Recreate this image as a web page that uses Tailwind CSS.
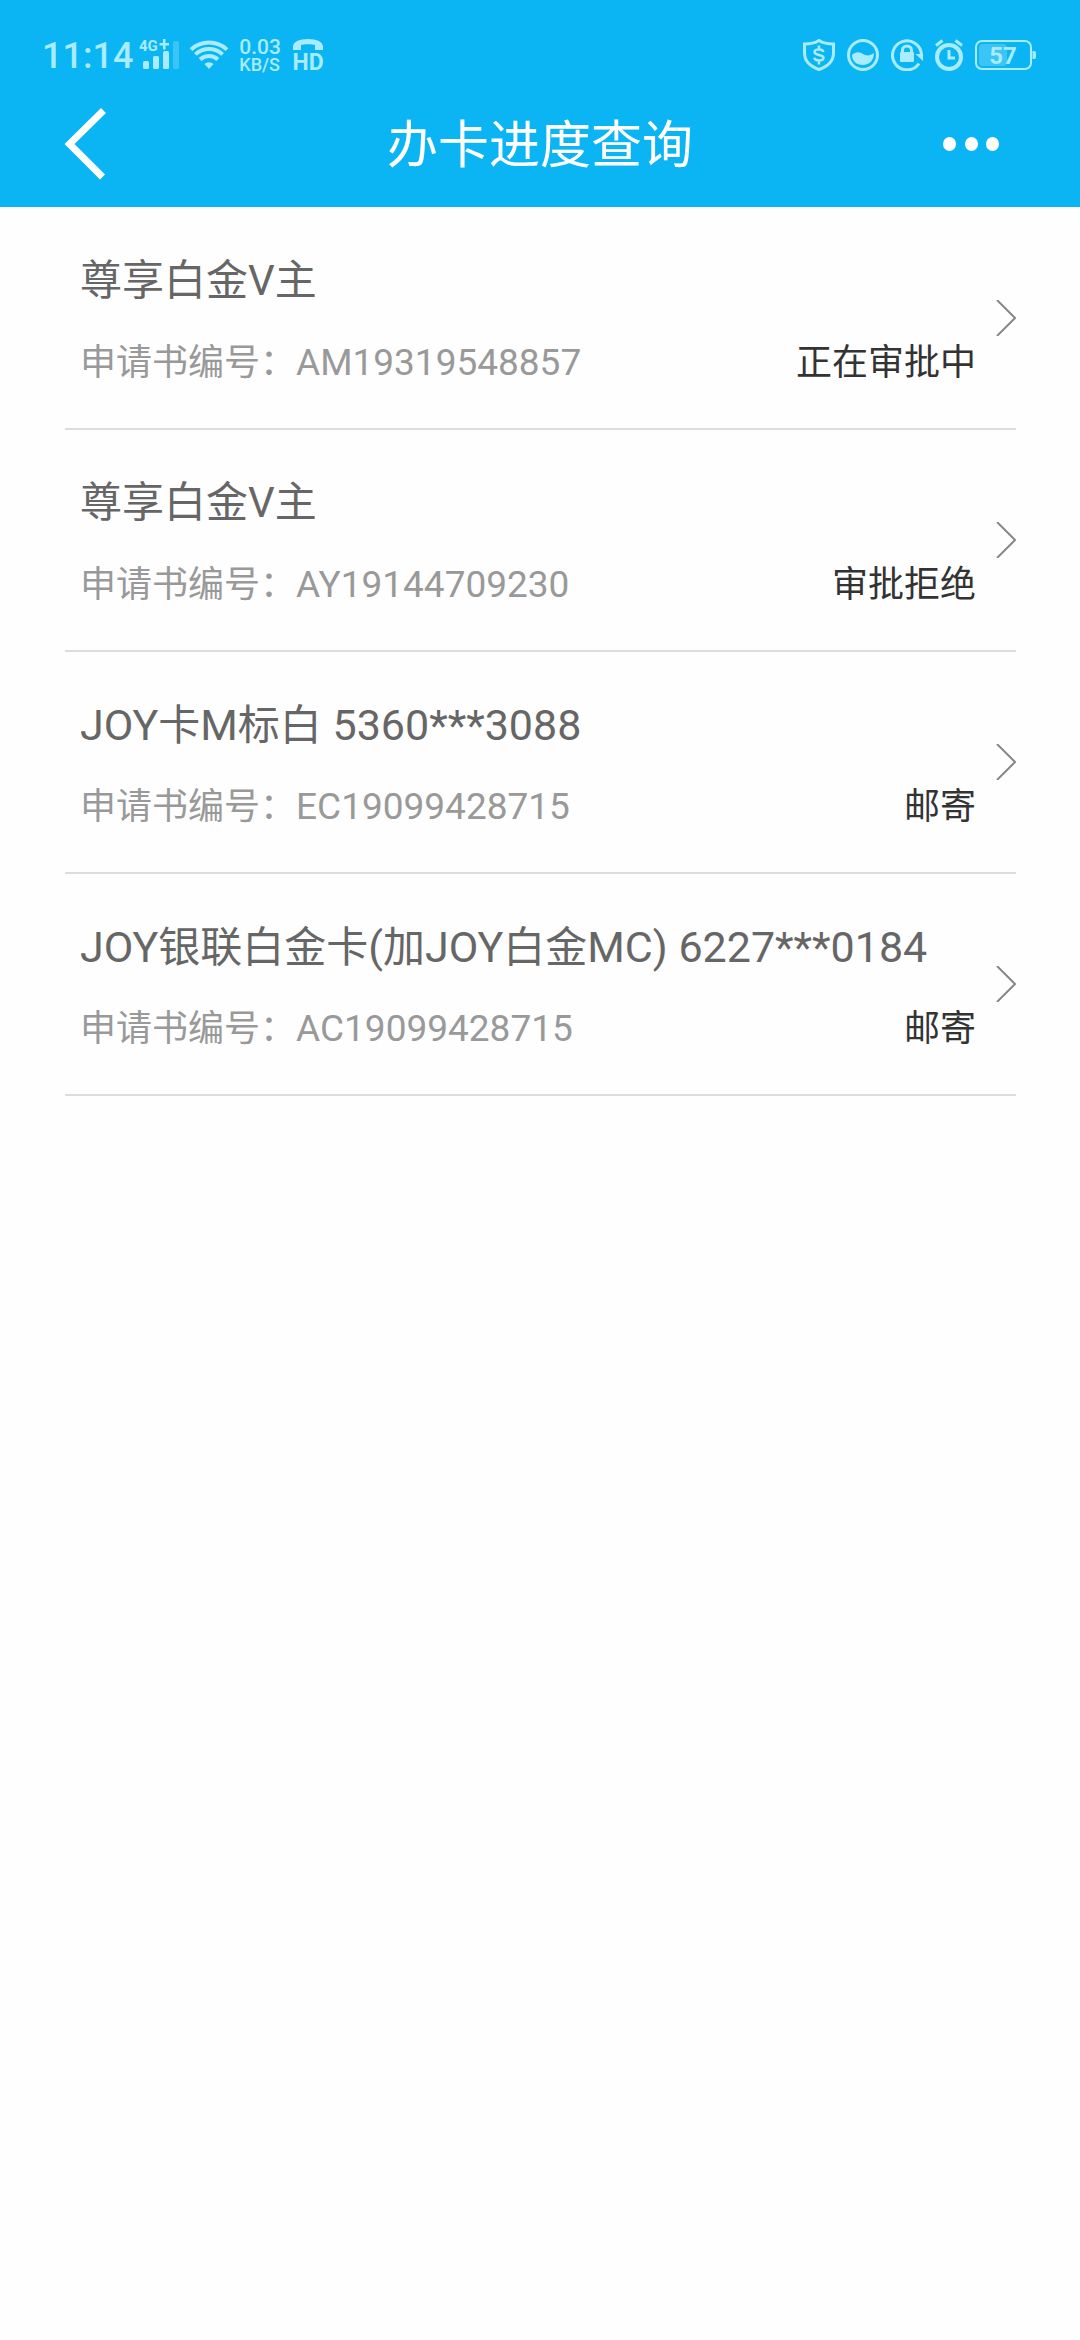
<!DOCTYPE html>
<html lang="zh-CN">
<head>
<meta charset="utf-8">
<meta name="viewport" content="width=device-width, initial-scale=1">
<title>办卡进度查询</title>
<script src="https://cdn.jsdelivr.net/npm/@tailwindcss/browser@4"></script>
</head>
<body class="min-h-screen bg-[#fefefe] font-[Roboto,'Noto_Sans_CJK_SC',sans-serif]">
<header class="bg-[#0bb5f3] text-white">
  <!-- Status bar -->
  <div class="flex h-20 items-center justify-between pt-[30px] pr-11 pl-[42px] text-[#a9ebff]">
    <div class="flex items-center">
      <span class="pt-[3px] text-[36px] leading-[47px] font-medium">11:14</span>
      <svg class="ml-[6px] h-8 w-[42px] overflow-visible" viewBox="0 0 42 32" fill="currentColor" aria-hidden="true">
        <text x="0" y="12" font-size="15" font-weight="700">4G</text>
        <path d="M20.500 4h3.500v-4h2.500v4h3.500v2.500h-3.500v4h-2.500v-4h-3.500z"/>
        <rect x="4" y="22" width="6" height="8" rx="1.500"/><rect x="14" y="17" width="6" height="13" rx="1.500"/><rect x="24" y="12" width="6" height="18" rx="1.500"/><rect x="34" y="2" width="6" height="28" rx="1.500" opacity=".3"/>
      </svg>
      <svg class="ml-[8px] h-8 w-10" viewBox="0 0 40 32" fill="none" stroke="currentColor" stroke-width="4" aria-hidden="true">
        <path d="M2 10.600a26.500 26.500 0 0 1 36 0M6.400 15.400a20 20 0 0 1 27.200 0M11.100 20.500a13 13 0 0 1 17.800 0"/><path d="M20 30l-4.500-5a7 7 0 0 1 9 0z" fill="currentColor" stroke="none"/>
      </svg>
      <span class="ml-[10px] flex flex-col font-medium"><span class="text-[21px] leading-[18px]">0.03</span><span class="text-[18px] leading-[17px]">KB/S</span></span>
      <svg class="ml-[11px] h-8 w-8 overflow-visible" viewBox="0 0 32 32" fill="currentColor" aria-hidden="true">
        <path d="M1 11V7.500C1 3 7 0 16 0s15 3 15 7.500V11h-8V6c-3-1-11-1-14 0v5z"/><text x="16" y="31" font-size="23" font-weight="700" text-anchor="middle">HD</text>
      </svg>
    </div>
    <div class="flex items-center gap-3">
      <svg class="h-8 w-8" viewBox="0 0 32 32" fill="none" stroke="currentColor" stroke-width="3" aria-hidden="true">
        <path d="M16 1.500C12 4 7 5 1.500 5v9c0 8 6 13.500 14.500 16.500C24.500 27.500 30.500 22 30.500 14V5C25 5 20 4 16 1.500z"/><path d="M20.500 13c-.5-1.800-2.300-2.500-4.500-2.500s-4.500.8-4.500 2.600c0 3.800 9 1.900 9 5.700 0 1.800-2.200 2.700-4.500 2.700s-4.300-.8-4.800-2.700M16 6.500v4M16 21.500v4" stroke-width="2.500"/>
      </svg>
      <svg class="h-8 w-8" viewBox="0 0 32 32" aria-hidden="true">
        <circle cx="16" cy="16" r="14.500" fill="none" stroke="currentColor" stroke-width="3"/><path d="M5 16c4-4 8-3 11-1s7 2 11-1c0 7-4.500 12-11 12S5 22 5 16z" fill="currentColor"/>
      </svg>
      <svg class="h-8 w-8" viewBox="0 0 32 32" aria-hidden="true">
        <path d="M28 24.500A14.500 14.500 0 1 1 30.500 16" fill="none" stroke="currentColor" stroke-width="3"/><path d="M24.500 15h7.500v7z" fill="currentColor"/><rect x="9" y="13" width="14" height="10" rx="1" fill="currentColor"/><path d="M11.500 14v-3a4.500 4 0 0 1 9 0v3" fill="none" stroke="currentColor" stroke-width="3"/>
      </svg>
      <svg class="h-8 w-7" viewBox="0 0 28 32" fill="none" stroke="currentColor" stroke-width="4" aria-hidden="true">
        <circle cx="14" cy="18" r="12"/><path d="M14 11v8h6M1 6.500l6.500-5M27 6.500l-6.500-5" stroke-width="3"/>
      </svg>
      <svg class="h-8 w-[61px]" viewBox="0 0 61 32" aria-hidden="true">
        <rect x="1" y="2" width="55" height="28" rx="6" fill="none" stroke="currentColor" stroke-width="2"/><rect x="4" y="5" width="28" height="22" rx="4" fill="currentColor" opacity=".3"/><path d="M57.500 12h1.500a2 2 0 0 1 2 2v4a2 2 0 0 1-2 2h-1.500z" fill="currentColor"/><text x="28" y="25" font-size="24" font-weight="700" text-anchor="middle" fill="currentColor">57</text>
      </svg>
    </div>
  </div>
  <!-- Navigation bar -->
  <div class="grid h-[127px] grid-cols-[1fr_auto_1fr] items-center px-[60px]">
    <button type="button" aria-label="返回" class="justify-self-start">
      <svg class="h-[72px] w-12" viewBox="0 0 48 72" fill="none" stroke="#fff" stroke-width="7"><path d="M43.500 2.500L9.500 36l33 33"/></svg>
    </button>
    <h1 class="pt-1 text-[51px] leading-[60px]">办卡进度查询</h1>
    <button type="button" aria-label="更多" class="justify-self-end">
      <svg class="h-[72px] w-20" viewBox="0 0 80 72" fill="#fff"><ellipse cx="9.500" cy="36" rx="6.500" ry="7"/><ellipse cx="31.500" cy="36" rx="6.500" ry="7"/><ellipse cx="52.500" cy="36" rx="6.500" ry="7"/></svg>
    </button>
  </div>
</header>
<main>
  <ul class="pt-px pr-16 pl-[65px]">
    <li class="border-b-2 border-[#dcdcdc]">
      <a href="#" class="flex items-center justify-between pt-[43px] pb-[35px] pl-[15px]">
        <span class="flex grow flex-col gap-[22px]"><span class="h-[60px] text-[42px] leading-[60px] text-[#666]">尊享白金V主</span><span class="flex h-[60px] justify-between text-[36px] leading-[60px]"><span class="text-[#999]">申请书编号：<span class="text-[37px]">AM19319548857</span></span><span class="text-[#333]">正在审批中</span></span></span>
        <svg class="-mt-2 ml-5 h-9 w-5 shrink-0" viewBox="0 0 20 36" fill="none" stroke="#888" stroke-width="2" aria-hidden="true"><path d="M1 0l18 18L1 36"/></svg>
      </a>
    </li>
    <li class="border-b-2 border-[#dcdcdc]">
      <a href="#" class="flex items-center justify-between pt-[43px] pb-[35px] pl-[15px]">
        <span class="flex grow flex-col gap-[22px]"><span class="h-[60px] text-[42px] leading-[60px] text-[#666]">尊享白金V主</span><span class="flex h-[60px] justify-between text-[36px] leading-[60px]"><span class="text-[#999]">申请书编号：<span class="text-[37px]">AY19144709230</span></span><span class="text-[#333]">审批拒绝</span></span></span>
        <svg class="-mt-2 ml-5 h-9 w-5 shrink-0" viewBox="0 0 20 36" fill="none" stroke="#888" stroke-width="2" aria-hidden="true"><path d="M1 0l18 18L1 36"/></svg>
      </a>
    </li>
    <li class="border-b-2 border-[#dcdcdc]">
      <a href="#" class="flex items-center justify-between pt-[43px] pb-[35px] pl-[15px]">
        <span class="flex grow flex-col gap-[22px]"><span class="h-[60px] text-[43px] leading-[60px] text-[#666]">JOY<span class="text-[42px]">卡</span>M<span class="text-[42px]">标白</span> 5360***3088</span><span class="flex h-[60px] justify-between text-[36px] leading-[60px]"><span class="text-[#999]">申请书编号：<span class="text-[37px]">EC19099428715</span></span><span class="text-[#333]">邮寄</span></span></span>
        <svg class="-mt-2 ml-5 h-9 w-5 shrink-0" viewBox="0 0 20 36" fill="none" stroke="#888" stroke-width="2" aria-hidden="true"><path d="M1 0l18 18L1 36"/></svg>
      </a>
    </li>
    <li class="border-b-2 border-[#dcdcdc]">
      <a href="#" class="flex items-center justify-between pt-[43px] pb-[35px] pl-[15px]">
        <span class="flex grow flex-col gap-[22px]"><span class="h-[60px] text-[43px] leading-[60px] text-[#666]">JOY<span class="text-[42px]">银联白金卡</span>(<span class="text-[42px]">加</span>JOY<span class="text-[42px]">白金</span>MC) 6227***0184</span><span class="flex h-[60px] justify-between text-[36px] leading-[60px]"><span class="text-[#999]">申请书编号：<span class="text-[37px]">AC19099428715</span></span><span class="text-[#333]">邮寄</span></span></span>
        <svg class="-mt-2 ml-5 h-9 w-5 shrink-0" viewBox="0 0 20 36" fill="none" stroke="#888" stroke-width="2" aria-hidden="true"><path d="M1 0l18 18L1 36"/></svg>
      </a>
    </li>
  </ul>
</main>
</body>
</html>
